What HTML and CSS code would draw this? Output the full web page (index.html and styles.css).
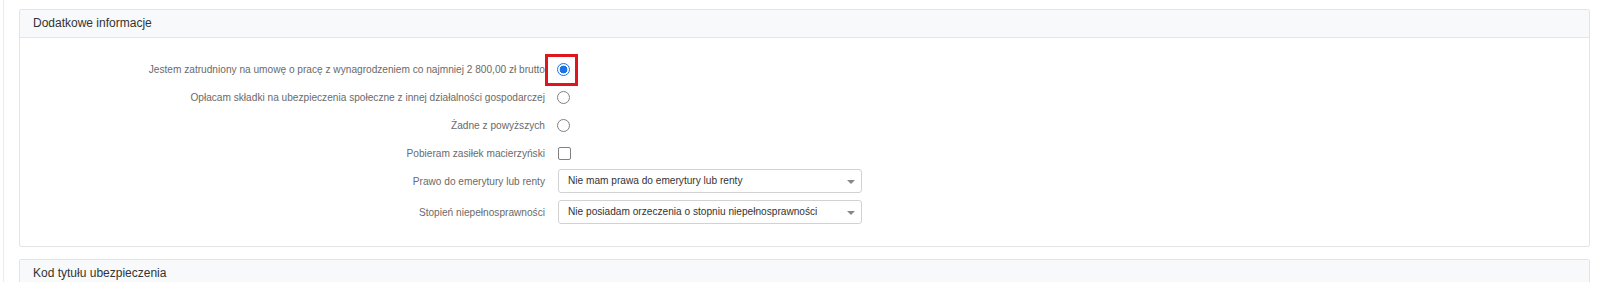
FILE: index.html
```html
<!DOCTYPE html>
<html lang="pl">
<head>
<meta charset="utf-8">
<title>Dodatkowe informacje</title>
<link rel="stylesheet" href="styles.css">
</head>
<body>
<div class="page">
  <section class="panel">
    <div class="panel-head">Dodatkowe informacje</div>
    <div class="panel-body">
      <div class="form">
        <div class="row row-check">
          <label class="lbl" for="r1">Jestem zatrudniony na umowę o pracę z wynagrodzeniem co najmniej 2 800,00 zł brutto</label>
          <div class="ctl highlight"><input class="radio" type="radio" name="zat" id="r1" checked></div>
        </div>
        <div class="row row-check">
          <label class="lbl" for="r2">Opłacam składki na ubezpieczenia społeczne z innej działalności gospodarczej</label>
          <div class="ctl"><input class="radio" type="radio" name="zat" id="r2"></div>
        </div>
        <div class="row row-check">
          <label class="lbl" for="r3">Żadne z powyższych</label>
          <div class="ctl"><input class="radio" type="radio" name="zat" id="r3"></div>
        </div>
        <div class="row row-check">
          <label class="lbl" for="c1">Pobieram zasiłek macierzyński</label>
          <div class="ctl"><input class="check" type="checkbox" id="c1"></div>
        </div>
        <div class="row row-select first-select">
          <label class="lbl" for="s1">Prawo do emerytury lub renty</label>
          <div class="ctl"><div class="select" id="s1"><span>Nie mam prawa do emerytury lub renty</span><i class="caret"></i></div></div>
        </div>
        <div class="row row-select">
          <label class="lbl" for="s2">Stopień niepełnosprawności</label>
          <div class="ctl"><div class="select" id="s2"><span>Nie posiadam orzeczenia o stopniu niepełnosprawności</span><i class="caret"></i></div></div>
        </div>
      </div>
    </div>
  </section>
  <section class="panel panel-next">
    <div class="panel-head">Kod tytułu ubezpieczenia</div>
    <div class="panel-body short"></div>
  </section>
</div>
</body>
</html>
```
FILE: styles.css
```css
html, body {
  margin: 0;
  padding: 0;
  background: #ffffff;
  font-family: "Liberation Sans", Arial, sans-serif;
  font-size: 12px;
  color: #333333;
}

.page {
  margin-left: 3px;
  border-left: 1px solid #ececec;
  padding: 9px 10px 0 15px;
  min-height: 300px;
}

.panel {
  border: 1px solid #e4e4e4;
  border-radius: 2px;
  background: #ffffff;
}

.panel-next {
  margin-top: 12px;
}

.panel-head {
  height: 27px;
  line-height: 27px;
  padding-left: 13px;
  background: #f8f9fa;
  border-bottom: 1px solid #e6e6e6;
  color: #333333;
  font-size: 12px;
}

.panel-body {
  padding: 17px 0 22px 0;
}

.panel-body.short {
  height: 40px;
  padding: 0;
}

.form {
  display: flex;
  flex-direction: column;
  font-size: 10.15px;
}

.row {
  display: grid;
  grid-template-columns: 525px 304px;
  column-gap: 13px;
  align-items: center;
}

.row-check {
  height: 28px;
}

.row-select {
  height: 24px;
  margin-bottom: 7px;
}

.first-select {
  margin-top: 2px;
}

.row-select:last-child {
  margin-bottom: 0;
}

.lbl {
  text-align: right;
  color: #6a6a6a;
  white-space: nowrap;
}

.ctl {
  position: relative;
  display: flex;
  align-items: center;
  height: 100%;
}

.radio, .check {
  appearance: none;
  -webkit-appearance: none;
  margin: 0;
  width: 13px;
  height: 13px;
  border: 1px solid #808080;
  background: #ffffff;
  box-sizing: border-box;
}

.radio {
  border-radius: 50%;
  margin-left: -1px;
}

.radio:checked {
  border: 1px solid #1a73e8;
  background: radial-gradient(circle, #1a73e8 0, #1a73e8 3.6px, #ffffff 4.2px);
}

.check {
  border-radius: 2px;
  margin-left: 0;
}

.highlight::after {
  content: "";
  position: absolute;
  left: -13px;
  top: -1px;
  width: 27px;
  height: 26px;
  border: 3px solid #e0161e;
}

.select {
  position: relative;
  box-sizing: border-box;
  width: 304px;
  height: 24px;
  line-height: 22px;
  border: 1px solid #d2d2d2;
  border-radius: 3px;
  padding-left: 9px;
  color: #333333;
  background: #ffffff;
  white-space: nowrap;
}

.caret {
  position: absolute;
  right: 6px;
  top: 10px;
  width: 0;
  height: 0;
  border-left: 4px solid transparent;
  border-right: 4px solid transparent;
  border-top: 4px solid #888888;
}
```
